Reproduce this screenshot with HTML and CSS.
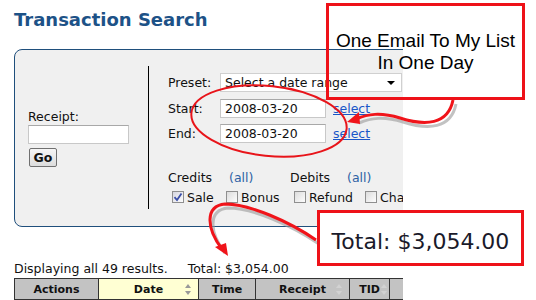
FILE: index.html
```
<!DOCTYPE html>
<html>
<head>
<meta charset="utf-8">
<link rel="stylesheet" href="styles.css">
</head>
<body>
<div class="page">
  <h1 class="title">Transaction Search</h1>
  <div class="panel">
    <div class="receipt-col">
      <label class="lbl">Receipt:</label>
      <div class="txt receipt-input"></div>
      <div class="btn">Go</div>
    </div>
    <div class="filter-col">
      <div class="row">
        <span class="flbl">Preset:</span>
        <div class="select">Select a date range<span class="caret"></span></div>
      </div>
      <div class="row r2">
        <span class="flbl">Start:</span>
        <div class="txt date">2008-03-20</div>
        <a class="link">select</a>
      </div>
      <div class="row r3">
        <span class="flbl">End:</span>
        <div class="txt date">2008-03-20</div>
        <a class="link">select</a>
      </div>
      <div class="groups">
        <span class="g1">Credits</span><span class="all a1">(all)</span>
        <span class="g2">Debits</span><span class="all a2">(all)</span>
      </div>
      <div class="checks">
        <span class="cb on"><svg width="10" height="10" viewBox="0 0 10 10"><path d="M1.5 5.2 L4 8 L8.5 1.5" fill="none" stroke="#3b4fa8" stroke-width="1.8"/></svg></span><span class="cl w1">Sale</span>
        <span class="cb"></span><span class="cl w2">Bonus</span>
        <span class="cb"></span><span class="cl w3">Refund</span>
        <span class="cb"></span><span class="cl">Chargeback</span>
      </div>
    </div>
  </div>
  <div class="summary"><span>Displaying all 49 results.</span><span class="tot">Total: $3,054.00</span></div>
  <table class="grid">
    <tr>
      <th class="c1">Actions</th>
      <th class="c2 sorted">Date<span class="sort"></span></th>
      <th class="c3">Time</th>
      <th class="c4">Receipt<span class="sort faint"></span></th>
      <th class="c5">TID<span class="sort faint"></span></th>
      <th class="c6"></th>
    </tr>
  </table>
</div>

<svg class="marks" width="536" height="300" viewBox="0 0 536 300">
  <ellipse cx="269" cy="121" rx="78" ry="35" transform="rotate(6 269 121)" fill="none" stroke="#e8141a" stroke-width="2"/>
  <g class="shadow" transform="translate(3 4)">
    <path d="M453 100 C 448 125, 425 126, 400 118 C 380 112, 368 114, 356 119" fill="none" stroke="#9a9a9a" stroke-width="3" opacity="0.6"/>
    <path d="M316 240 C 290 222, 250 204, 225 204 C 205 206, 206 228, 222 249" fill="none" stroke="#9a9a9a" stroke-width="3" opacity="0.6"/>
  </g>
  <path d="M453 100 C 448 125, 425 126, 400 118 C 380 112, 368 114, 356 119" fill="none" stroke="#f0141a" stroke-width="3"/>
  <path d="M347 122 L359 112 L360 124 Z" fill="#f0141a"/>
  <path d="M316 240 C 290 222, 250 204, 225 204 C 205 206, 206 228, 222 249" fill="none" stroke="#f0141a" stroke-width="3"/>
  <path d="M228 256 L215 247 L226 243 Z" fill="#f0141a"/>
</svg>

<div class="note note-email">One Email To My List<br>In One Day</div>
<div class="note note-total">Total: $3,054.00</div>
</body>
</html>
```

FILE: styles.css
```
* { box-sizing: border-box; }
html, body { margin: 0; padding: 0; background: #fff; }
body {
  font-family: "DejaVu Sans", Verdana, sans-serif;
  font-size: 12.5px;
  color: #111;
  width: 536px;
  height: 300px;
  overflow: hidden;
  position: relative;
}
.page {
  width: 403px;
  overflow: hidden;
  padding-left: 14px;
  padding-top: 9px;
}
.title {
  margin: 0;
  font-size: 18px;
  font-weight: bold;
  color: #1d5287;
  line-height: 22px;
}
.panel {
  margin-top: 18px;
  width: 420px;
  height: 178px;
  background: #f0f0f0;
  border: 1px solid #1f4f7c;
  border-radius: 8px;
  display: flex;
  padding: 16px 0 17px 0;
}
.receipt-col {
  width: 133px;
  flex: none;
  padding-left: 13px;
  padding-top: 43px;
}
.lbl { display: block; line-height: 15px; margin-bottom: 1px; }
.txt {
  background: #fff;
  border: 1px solid #c8c8c8;
  border-top-color: #a8a8a8;
  height: 19px;
  line-height: 17px;
  padding-left: 4px;
}
.receipt-input { width: 101px; }
.btn {
  margin-top: 4px;
  margin-left: 1px;
  width: 28px;
  height: 19px;
  border: 1px solid #707070;
  border-radius: 2px;
  background: linear-gradient(#f6f6f6, #dcdcdc);
  font-weight: bold;
  font-size: 12.5px;
  line-height: 17px;
  text-align: center;
}
.filter-col {
  border-left: 1px solid #000;
  padding-left: 19px;
  padding-top: 7px;
  flex: none;
  width: 286px;
}
.row { display: flex; align-items: center; height: 19px; white-space: nowrap; }
.r2 { margin-top: 7px; }
.r3 { margin-top: 6px; }
.flbl { width: 52px; flex: none; }
.select {
  width: 182px;
  flex: none;
  height: 19px;
  background: #fff;
  border: 1px solid #d0d0d0;
  padding-left: 4px;
  line-height: 17px;
  position: relative;
}
.caret {
  position: absolute;
  right: 6px;
  top: 7px;
  border-left: 4px solid transparent;
  border-right: 4px solid transparent;
  border-top: 4px solid #000;
}
.date { width: 106px; flex: none; }
.link {
  margin-left: 7px;
  color: #1a56c8;
  text-decoration: underline;
}
.groups {
  margin-top: 27px;
  display: flex;
  line-height: 15px;
  white-space: nowrap;
}
.g1 { width: 61px; flex: none; }
.a1 { width: 61px; flex: none; }
.g2 { width: 57px; flex: none; }
.all { color: #2e62a4; }
.checks {
  margin-top: 4px;
  display: flex;
  align-items: center;
  height: 16px;
  white-space: nowrap;
}
.cb {
  width: 12px;
  height: 12px;
  border: 1px solid #8f8f8f;
  background: linear-gradient(135deg, #dcdcdc, #fdfdfd);
  display: inline-flex;
  align-items: center;
  justify-content: center;
  flex: none;
}
.cb.on { margin-left: 4px; background: linear-gradient(135deg, #d6d6e0, #fdfdfd); }
.cl { margin-left: 3px; flex: none; }
.w1 { width: 39px; }
.w2 { width: 53px; }
.w3 { width: 56px; }
.summary {
  margin-top: 34px;
  line-height: 15px;
  display: flex;
  white-space: nowrap;
}
.tot { margin-left: 20px; }
.grid {
  margin-top: 2px;
  border-collapse: collapse;
  width: 420px;
  table-layout: fixed;
}
.grid th {
  height: 21px;
  background: #c3c3c3;
  border: 1px solid #333;
  font-size: 11px;
  font-weight: bold;
  padding: 0;
  position: relative;
  text-align: center;
}
.c1 { width: 84px; }
.c2 { width: 100px; }
.c3 { width: 57px; }
.c4 { width: 94px; }
.c5 { width: 40px; }
.c6 { width: 45px; }
.grid th.sorted { background: #ffffd3; }
.sort {
  position: absolute;
  right: 6px;
  top: 5px;
  width: 7px;
  height: 11px;
}
.sort::before, .sort::after {
  content: "";
  position: absolute;
  left: 0;
  border-left: 3.5px solid transparent;
  border-right: 3.5px solid transparent;
}
.sort::before { top: 0; border-bottom: 4px solid #999; }
.sort::after { bottom: 0; border-top: 4px solid #999; }
.sort.faint::before { border-bottom-color: #d2d2d2; }
.sort.faint::after { border-top-color: #d2d2d2; }
.c5 .sort { right: 1px; }

.marks { position: absolute; left: 0; top: 0; pointer-events: none; }
.note {
  position: absolute;
  border: 3px solid #ee1118;
  color: #000;
  text-align: center;
}
.note-email {
  left: 326px;
  top: 3px;
  width: 199px;
  height: 97px;
  background: transparent;
  font-family: "Liberation Sans", Arial, sans-serif;
  font-size: 19px;
  line-height: 22px;
  padding-top: 24px;
}
.note-total {
  left: 317px;
  top: 210px;
  width: 207px;
  height: 56px;
  background: #fff;
  font-family: "DejaVu Sans", Verdana, sans-serif;
  font-size: 22px;
  padding-top: 16px;
  color: #1a1a2a;
  white-space: nowrap;
}
```
